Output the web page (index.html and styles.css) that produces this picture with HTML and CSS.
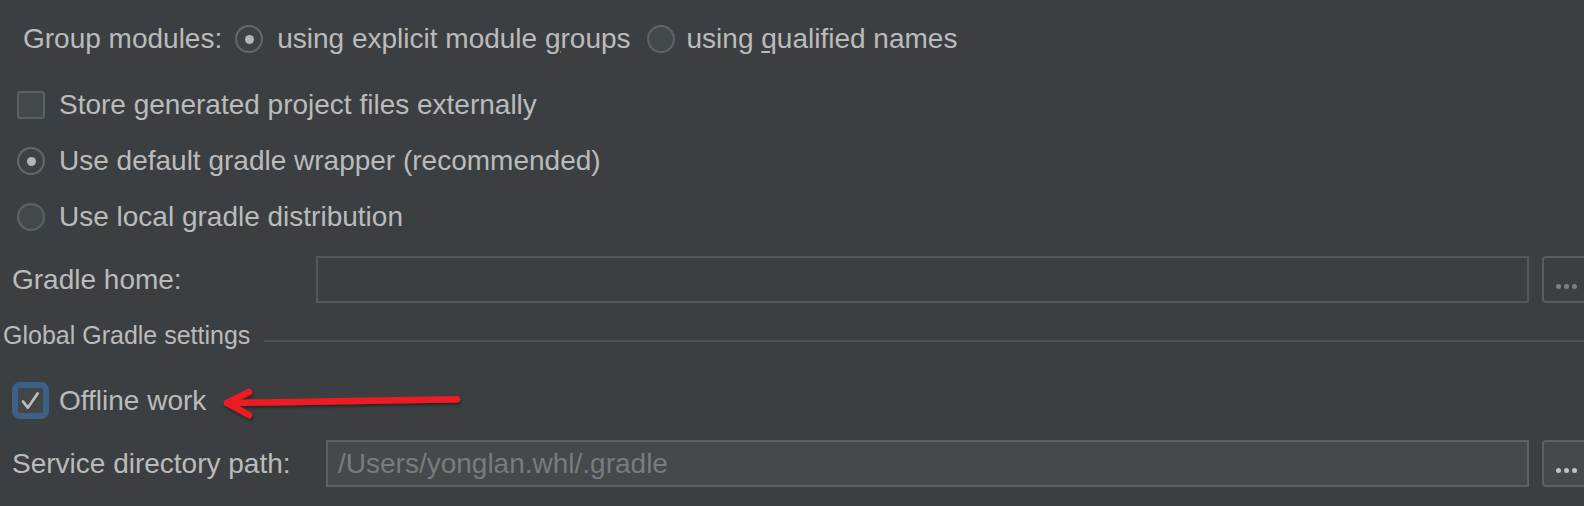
FILE: index.html
```html
<!DOCTYPE html>
<html lang="en">
<head>
<meta charset="utf-8">
<title>Gradle settings</title>
<link rel="stylesheet" href="styles.css">
</head>
<body>
<div class="panel">
  <div class="row row-group">
    <span class="group-label">Group modules:</span>
    <span class="opt"><span class="radio checked"></span><span class="opt-text">using explicit module <u>g</u>roups</span></span>
    <span class="opt opt-second"><span class="radio"></span><span class="opt-text">using <u>q</u>ualified names</span></span>
  </div>

  <div class="row row-item"><span class="checkbox"></span><span>Store generated project files externally</span></div>
  <div class="row row-item"><span class="radio checked"></span><span>Use default gradle wrapper (recommended)</span></div>
  <div class="row row-item"><span class="radio"></span><span>Use local gradle distribution</span></div>

  <div class="field-row field-row-home">
    <span class="field-label label-home">Gradle home:</span>
    <div class="field"></div>
    <div class="browse"><span class="dot"></span><span class="dot"></span><span class="dot"></span></div>
  </div>

  <div class="section">
    <span class="section-title">Global Gradle settings</span>
    <div class="sep"></div>
  </div>

  <div class="row row-offline">
    <span class="checkbox checked focused">
      <svg viewBox="0 0 28 28" width="28" height="28"><path d="M5.5 14.5 L11 21.5 L22 5.5" fill="none" stroke="#bdbdbd" stroke-width="3" stroke-linecap="round" stroke-linejoin="round"/></svg>
    </span><span>Offline work</span>
  </div>

  <div class="field-row field-row-service">
    <span class="field-label label-service">Service directory path:</span>
    <div class="field field-filled">/Users/yonglan.whl/.gradle</div>
    <div class="browse browse-active"><span class="dot"></span><span class="dot"></span><span class="dot"></span></div>
  </div>

  <svg class="arrow" width="1584" height="506" viewBox="0 0 1584 506">
    <defs>
      <filter id="sh" x="-10%" y="-50%" width="120%" height="200%">
        <feDropShadow dx="1" dy="2" stdDeviation="1.5" flood-color="#000" flood-opacity="0.45"/>
      </filter>
    </defs>
    <g filter="url(#sh)" fill="none" stroke="#ee1b24" stroke-width="6.5" stroke-linecap="round" stroke-linejoin="round">
      <path d="M457 399.3 L227 403"/>
      <path d="M249 392 L227 403 L249 415"/>
    </g>
  </svg>
</div>
</body>
</html>
```

FILE: styles.css
```css
html, body {
  margin: 0;
  padding: 0;
  background: #3c3f41;
  width: 1584px;
  height: 506px;
  overflow: hidden;
}

.panel {
  position: relative;
  width: 1584px;
  height: 506px;
  padding-top: 11px;
  box-sizing: border-box;
  font-family: "Liberation Sans", Arial, sans-serif;
  font-size: 28px;
  color: #bbbbbb;
}

.row {
  display: flex;
  align-items: center;
  white-space: nowrap;
}

.row-group {
  height: 56px;
  margin-bottom: 10px;
  padding-left: 23px;
}

.group-label {
  margin-right: 13px;
}

.opt {
  display: flex;
  align-items: center;
}

.opt .radio {
  margin-right: 14px;
}

.opt-second {
  margin-left: 16px;
}

.opt-second .radio {
  margin-right: 12px;
}

u {
  text-decoration-thickness: 1.5px;
  text-underline-offset: 3px;
}

.row-item {
  height: 56px;
  padding-left: 17px;
}

.row-item .radio,
.row-item .checkbox {
  margin-right: 14px;
}

.radio {
  flex: none;
  box-sizing: border-box;
  width: 28px;
  height: 28px;
  border-radius: 50%;
  border: 2px solid #606365;
  background: #43494a;
  display: flex;
  align-items: center;
  justify-content: center;
}

.radio.checked {
  background: #3e4244;
  border-color: #65686a;
}

.radio.checked::after {
  content: "";
  width: 9px;
  height: 9px;
  border-radius: 50%;
  background: #b3b5b7;
}

.checkbox {
  flex: none;
  box-sizing: border-box;
  width: 28px;
  height: 28px;
  border-radius: 3px;
  border: 2px solid #5e6162;
  background: #43494a;
}

.checkbox.focused {
  width: 29px;
  height: 29px;
  border: 2px solid #3d6185;
  box-shadow: 0 0 0 4px #3d6185;
  border-radius: 4px;
  background: #424647;
  display: flex;
  align-items: center;
  justify-content: center;
}

.checkbox svg {
  display: block;
}

.field-row {
  display: flex;
  align-items: stretch;
  height: 47px;
  padding-left: 12px;
  white-space: nowrap;
}

.field-row-home {
  margin-top: 11px;
}

.field-row-service {
  margin-top: 12px;
}

.field-label {
  flex: none;
  display: flex;
  align-items: center;
}

.label-home {
  width: 304px;
}

.label-service {
  width: 314px;
}

.field {
  flex: none;
  box-sizing: border-box;
  height: 47px;
  border: 2px solid #545658;
  background: #3c3f41;
  margin-right: 13px;
}

.field-row-home .field {
  width: 1213px;
}

.field-filled {
  width: 1203px;
  background: #45494a;
  border-color: #5d6163;
  color: #7a7b7c;
  padding-left: 10px;
  display: flex;
  align-items: center;
}

.browse {
  flex: none;
  box-sizing: border-box;
  width: 70px;
  height: 47px;
  border: 2px solid #5a5c5e;
  border-radius: 4px;
  background: #3c3f41;
  display: flex;
  align-items: flex-end;
  gap: 3px;
  padding-left: 12px;
  padding-bottom: 12px;
}

.browse-active {
  background: #45494a;
  border-color: #5d6163;
}

.dot {
  width: 5px;
  height: 5px;
  border-radius: 50%;
  background: #7d7f81;
}

.browse-active .dot {
  background: #c2c2c2;
}

.section {
  display: flex;
  align-items: flex-start;
  height: 28px;
  margin-top: 18px;
  padding-left: 3px;
  white-space: nowrap;
}

.section-title {
  font-size: 25px;
  line-height: 28px;
  margin-right: 14px;
}

.sep {
  flex: 1;
  height: 2px;
  margin-top: 19px;
  background: #515355;
}

.row-offline {
  height: 55px;
  margin-top: 24px;
  padding-left: 16px;
}

.row-offline .checkbox {
  margin-right: 14px;
}

.arrow {
  position: absolute;
  left: 0;
  top: 0;
  pointer-events: none;
}
```
